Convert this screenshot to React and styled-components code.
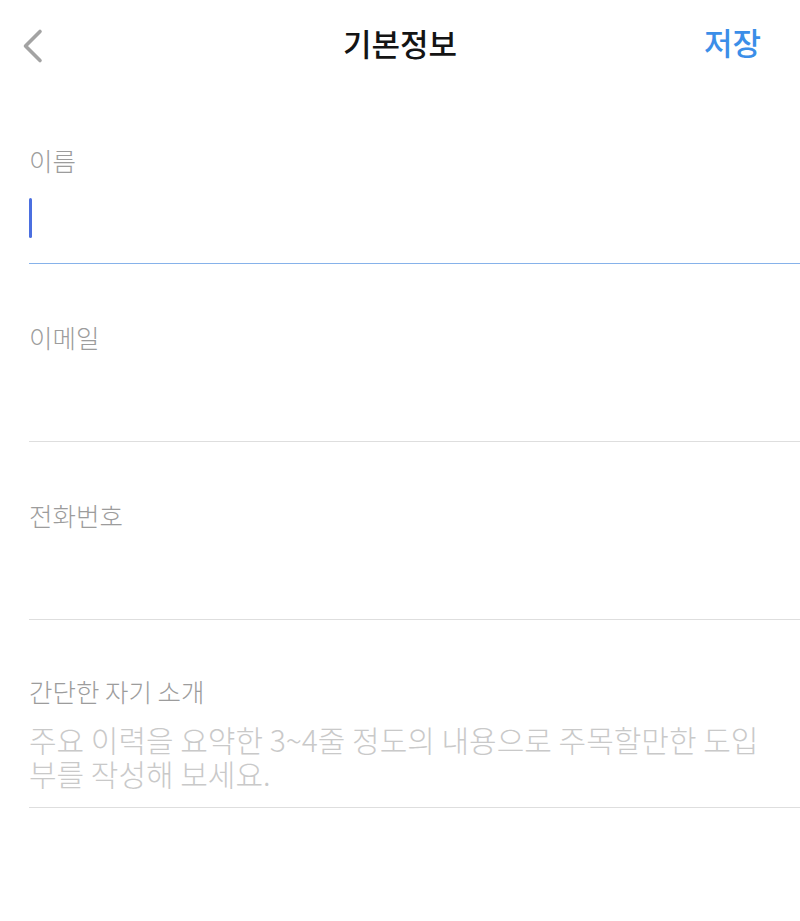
import React from 'react';
import styled, { createGlobalStyle } from 'styled-components';

const GlobalStyle = createGlobalStyle`
  html, body {
    margin: 0;
    padding: 0;
    background: #ffffff;
  }
  body {
    font-family: "Noto Sans CJK KR", "Noto Sans", sans-serif;
  }
`;

const Page = styled.div`
  width: 800px;
  min-height: 921px;
  background: #fff;
  overflow: hidden;
`;

const TopBar = styled.header`
  height: 86px;
  display: grid;
  grid-template-columns: 1fr auto 1fr;
  align-items: center;
  padding: 0 40px;
  box-sizing: border-box;
`;

const BackButton = styled.button`
  border: none;
  background: none;
  padding: 0;
  width: 24px;
  height: 40px;
  display: flex;
  align-items: center;
  cursor: pointer;
  margin-top: 6px;
  margin-left: -18px;
`;

const Title = styled.h1`
  margin: 0;
  text-align: center;
  font-size: 31px;
  font-weight: 500;
  color: #141414;
  margin-top: -2px;
`;

const SaveButton = styled.button`
  border: none;
  background: none;
  padding: 0;
  justify-self: end;
  font-family: inherit;
  font-size: 31px;
  font-weight: 500;
  color: #3b8ee8;
  cursor: pointer;
  margin-top: -4px;
  margin-right: -1px;
`;

const Form = styled.form`
  padding-left: 29px;
`;

const Field = styled.div`
  padding-top: ${p => p.$top || 54}px;
  border-bottom: 1px solid ${p => (p.$focused ? '#86b2ea' : '#dedede')};
`;

const Label = styled.label`
  display: block;
  font-size: 25.5px;
  line-height: 34px;
  font-weight: 300;
  color: #9c9c9c;
`;

const InputArea = styled.div`
  height: ${p => p.$height || 88}px;
  display: flex;
  align-items: center;
`;

const Caret = styled.span`
  display: block;
  width: 3px;
  height: 40px;
  border-radius: 2px;
  background: #4b6fe0;
  margin-top: -4px;
`;

const Intro = styled.textarea`
  display: block;
  width: 100%;
  box-sizing: border-box;
  border: none;
  outline: none;
  resize: none;
  padding: 0 30px 0 0;
  margin: 14px 0 17px;
  font-family: inherit;
  font-size: 30px;
  font-weight: 300;
  line-height: 34px;
  height: 68px;
  color: #333;
  background: transparent;
  overflow: hidden;

  &::placeholder {
    color: #c9c9c9;
  }
`;

const fields = [
  { label: '이메일' },
  { label: '전화번호' },
];

export default function App() {
  return (
    <Page>
      <GlobalStyle />
      <TopBar>
        <BackButton type="button" aria-label="뒤로">
          <svg width="22" height="36" viewBox="0 0 22 36">
            <path
              d="M18 3.5 L3.5 18 L18 32.5"
              fill="none"
              stroke="#a3a3a3"
              strokeWidth="3.6"
              strokeLinecap="round"
              strokeLinejoin="round"
            />
          </svg>
        </BackButton>
        <Title>기본정보</Title>
        <SaveButton type="button">저장</SaveButton>
      </TopBar>
      <Form>
        <Field $focused $top={57}>
          <Label>이름</Label>
          <InputArea $height={86}>
            <Caret />
          </InputArea>
        </Field>
        {fields.map(f => (
          <Field key={f.label} $top={56}>
            <Label>{f.label}</Label>
            <InputArea $height={87} />
          </Field>
        ))}
        <Field $top={54}>
          <Label>간단한 자기 소개</Label>
          <Intro
            rows={2}
            placeholder="주요 이력을 요약한 3~4줄 정도의 내용으로 주목할만한 도입부를 작성해 보세요."
          />
        </Field>
      </Form>
    </Page>
  );
}
